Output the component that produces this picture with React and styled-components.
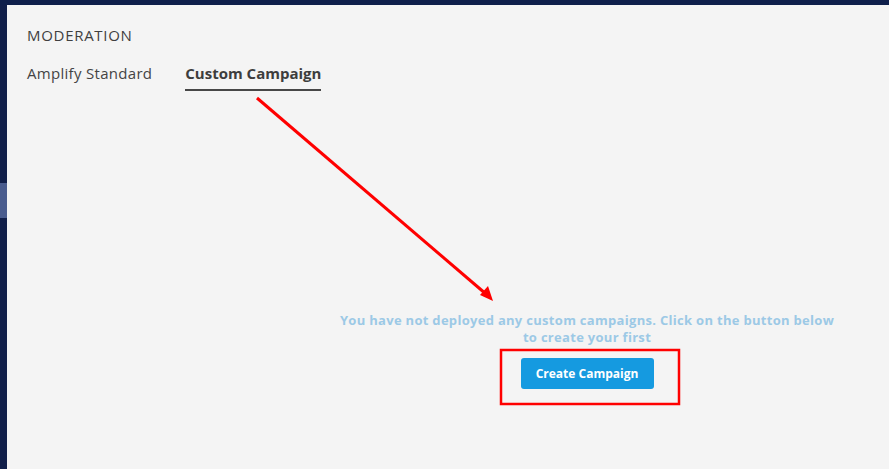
import React from 'react';
import styled, { createGlobalStyle } from 'styled-components';

const GlobalStyle = createGlobalStyle`
  html, body {
    margin: 0;
    padding: 0;
    background: #0f1f4b;
  }
  * {
    box-sizing: border-box;
  }
`;

const FONT = `"Open Sans", "Noto Sans", Arial, sans-serif`;

const Page = styled.div`
  width: 889px;
  height: 469px;
  display: flex;
  flex-direction: column;
  background: #0f1f4b;
  overflow: hidden;
`;

const TopBar = styled.div`
  height: 5px;
  flex-shrink: 0;
  background: #0f1f4b;
`;

const Body = styled.div`
  flex: 1;
  display: flex;
`;

const SideRail = styled.div`
  width: 7px;
  flex-shrink: 0;
  background: #111f4a;
  padding-top: 178px;
`;

const RailMarker = styled.div`
  height: 35px;
  background: #4a5c8e;
`;

const Panel = styled.div`
  position: relative;
  flex: 1;
  background: #f4f4f4;
  border-right: 2px solid #f7f7f7;
  padding: 20px 20px 0 20px;
  font-family: ${FONT};
`;

const Title = styled.div`
  font-size: 15px;
  line-height: 20px;
  color: #3f3f3f;
  letter-spacing: 0.7px;
`;

const Tabs = styled.div`
  display: flex;
  gap: 33px;
  margin-top: 18px;
`;

const Tab = styled.div`
  font-size: 15px;
  line-height: 20px;
  padding-bottom: 6px;
  color: ${(p) => (p.$active ? '#3d3d3d' : '#444')};
  font-weight: ${(p) => (p.$active ? 700 : 400)};
  letter-spacing: ${(p) => (p.$active ? '0' : '0.3px')};
  border-bottom: 2px solid ${(p) => (p.$active ? '#474747' : 'transparent')};
`;

const EmptyState = styled.div`
  width: 600px;
  margin-left: 260px;
  margin-top: 221px;
  display: flex;
  flex-direction: column;
  align-items: center;
`;

const EmptyText = styled.p`
  margin: 0;
  width: 506px;
  text-align: center;
  font-size: 13px;
  line-height: 17px;
  font-weight: 700;
  letter-spacing: 0.3px;
  color: #9cc9e6;
`;

const CreateButton = styled.button`
  margin-top: 12px;
  width: 133px;
  height: 31px;
  border: none;
  border-radius: 3px;
  background: #159ae0;
  color: #fff;
  font-family: ${FONT};
  font-weight: 700;
  font-size: 12px;
  cursor: pointer;
`;

const Annotations = styled.svg`
  position: absolute;
  left: -7px;
  top: -5px;
  width: 889px;
  height: 469px;
  pointer-events: none;
`;

export default function App() {
  return (
    <>
      <GlobalStyle />
      <Page>
        <TopBar />
        <Body>
          <SideRail>
            <RailMarker />
          </SideRail>
          <Panel>
            <Title>MODERATION</Title>
            <Tabs>
              <Tab>Amplify Standard</Tab>
              <Tab $active>Custom Campaign</Tab>
            </Tabs>
            <EmptyState>
              <EmptyText>
                You have not deployed any custom campaigns. Click on the button below to create your first
              </EmptyText>
              <CreateButton>Create Campaign</CreateButton>
            </EmptyState>
            <Annotations viewBox="0 0 889 469">
              <line x1="257" y1="98" x2="486" y2="294" stroke="#ff0000" strokeWidth="3" />
              <polygon points="493,301 480,295 488,286" fill="#ff0000" />
              <rect x="501" y="350" width="178" height="54" fill="none" stroke="#ff0000" strokeWidth="2.5" />
            </Annotations>
          </Panel>
        </Body>
      </Page>
    </>
  );
}
